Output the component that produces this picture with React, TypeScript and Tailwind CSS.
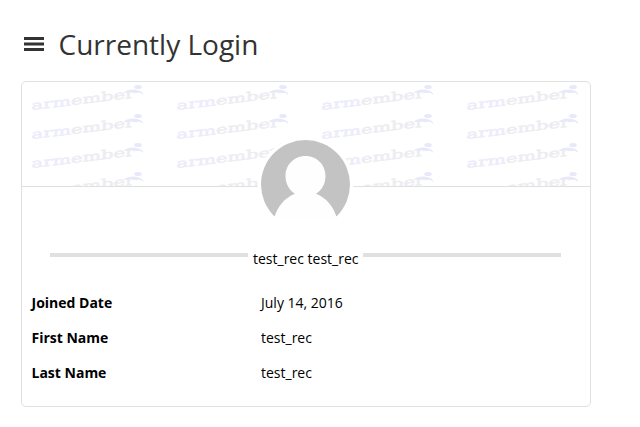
const tiles = Array.from({ length: 16 }, (_, i) => i);

const fields = [
  { label: "Joined Date", value: "July 14, 2016" },
  { label: "First Name", value: "test_rec" },
  { label: "Last Name", value: "test_rec" },
];

function Watermark() {
  return (
    <svg width="145" height="29" viewBox="0 0 145 29" className="block overflow-visible">
      <text
        transform="matrix(1.66 -0.2 0 1 9.500 28)"
        fontSize="12.5"
        fontWeight="400"
        textLength="62"
        lengthAdjust="spacingAndGlyphs"
        strokeWidth="0.5"
        className="font-['DejaVu_Serif',serif]"
      >
        <tspan fill="#ececfa" stroke="#ececfa">arm</tspan>
        <tspan fill="#ededf1" stroke="#ededf1">ember</tspan>
      </text>
      <ellipse cx="116" cy="5" rx="3.800" ry="2" fill="#e8e8fb" />
      <path d="M101 10.800C106 7.600 111 6.800 116 8.200C119 9 121 10.200 121.500 13C118.500 10.500 116.500 10.400 113.500 11.300C113 9.800 108 9.600 101 10.800Z" fill="#e8e8fb" />
    </svg>
  );
}

function Avatar() {
  return (
    <svg width="97" height="97" viewBox="-0.5 -0.5 97 97" className="block">
      <defs>
        <clipPath id="avatar-circle">
          <circle cx="48" cy="48" r="44.5" />
        </clipPath>
      </defs>
      <circle cx="48" cy="48" r="48" fill="#fff" />
      <rect width="96" height="80" fill="#c3c3c3" clipPath="url(#avatar-circle)" />
      <path
        d="M16.500 82C20 69 28 61 37.500 57.200C31.500 53.500 28 47 28 39.500C28 28 37 19.500 48 19.500C59 19.500 68 28 68 39.500C68 47 64.500 53.500 58.500 57.200C68 61 76 69 79.500 82Z"
        fill="#fefefe"
      />
    </svg>
  );
}

export default function App() {
  return (
    <main className="h-[427px] w-[640px] overflow-hidden bg-white pl-[21px] pt-[23px] font-['Open_Sans',sans-serif] text-black">
      <h1 className="flex h-[58px] items-start text-[28px] leading-[42px] text-[#333]">
        <svg width="20" height="14" viewBox="0 0 20 14" className="ml-[3px] mr-[14.500px] mt-[14px]" fill="#333" aria-hidden="true">
          <path d="M0 0h20v3H0zM0 5.500h20v3H0zM0 11h20v3H0z" />
        </svg>
        Currently Login
      </h1>
      <section className="h-[326px] w-[570px] rounded-[5px] border border-[#e0e0e0]">
        <div className="relative h-[105px] border-b border-[#e0e0e0]">
          <div className="grid h-[104px] grid-cols-[repeat(4,145px)] auto-rows-[29px] overflow-hidden">
            {tiles.map((tile) => (
              <Watermark key={tile} />
            ))}
          </div>
          <div className="absolute left-[235px] top-[54px]">
            <Avatar />
          </div>
        </div>
        <div className="mx-7 mt-[60px] flex h-[23px] items-start">
          <div className="mt-[6px] h-1 w-[198px] bg-[#e0e0e0]" />
          <span className="w-[115px] whitespace-nowrap pl-[5px] pt-px text-[14px] leading-[22px]">test_rec test_rec</span>
          <div className="mt-[6px] h-1 w-[198px] bg-[#e0e0e0]" />
        </div>
        <dl className="mt-[15px]">
          {fields.map((field) => (
            <div key={field.label} className="grid h-[35px] grid-cols-[229.500px_1fr] items-center pl-[9.500px] text-[14px] leading-5">
              <dt className="font-bold">{field.label}</dt>
              <dd>{field.value}</dd>
            </div>
          ))}
        </dl>
      </section>
    </main>
  );
}
